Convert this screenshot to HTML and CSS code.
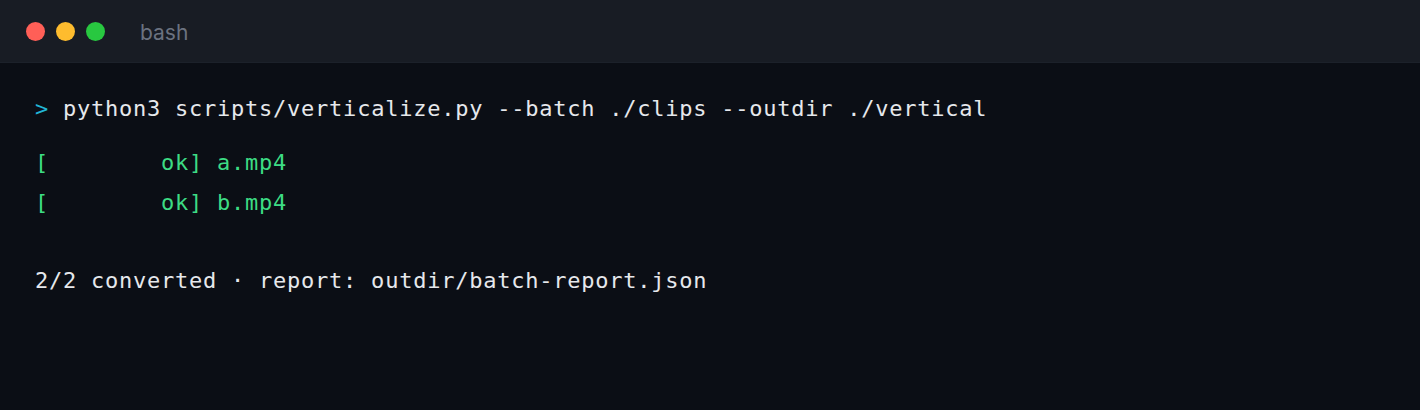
FILE: index.html
```html
<!DOCTYPE html>
<html>
<head>
<meta charset="utf-8">
<link rel="stylesheet" href="styles.css">
</head>
<body>
<div class="term">
  <div class="titlebar">
    <div class="dots">
      <span class="dot red"></span>
      <span class="dot yellow"></span>
      <span class="dot green"></span>
    </div>
    <div class="title">bash</div>
  </div>
  <div class="screen">
    <div class="line cmd"><span class="prompt">&gt;</span> python3 scripts/verticalize.py --batch ./clips --outdir ./vertical</div>
    <div class="out">
      <div class="line ok">[        ok] a.mp4</div>
      <div class="line ok">[        ok] b.mp4</div>
      <div class="line blank"> </div>
      <div class="line">2/2 converted · report: outdir/batch-report.json</div>
    </div>
  </div>
</div>
</body>
</html>
```
FILE: styles.css
```css
html, body {
  margin: 0;
  padding: 0;
  background: #0b0e15;
}
.term {
  width: 1420px;
  height: 410px;
  background: #0b0e15;
  display: flex;
  flex-direction: column;
}
.titlebar {
  height: 63px;
  background: #181c24;
  border-bottom: 1px solid #1c212a;
  display: flex;
  align-items: center;
  padding-left: 26px;
  box-sizing: border-box;
}
.dots {
  display: flex;
  gap: 11px;
}
.dot {
  width: 19px;
  height: 19px;
  border-radius: 50%;
  display: block;
}
.red { background: #ff5f57; }
.yellow { background: #febc2e; }
.green { background: #28c840; }
.title {
  margin-left: 35px;
  margin-top: 2px;
  font-family: "Inter", "Liberation Sans", sans-serif;
  font-size: 21px;
  color: #6b7280;
}
.screen {
  padding: 26px 35px;
  font-family: "DejaVu Sans Mono", monospace;
  font-size: 22px;
  letter-spacing: 0.76px;
  color: #e6e8ec;
}
.line {
  height: 40px;
  line-height: 40px;
  white-space: pre;
}
.line.blank {
  height: 38px;
}
.out {
  margin-top: 14px;
}
.prompt {
  color: #22b5d6;
}
.ok {
  color: #3ddc84;
}
```
